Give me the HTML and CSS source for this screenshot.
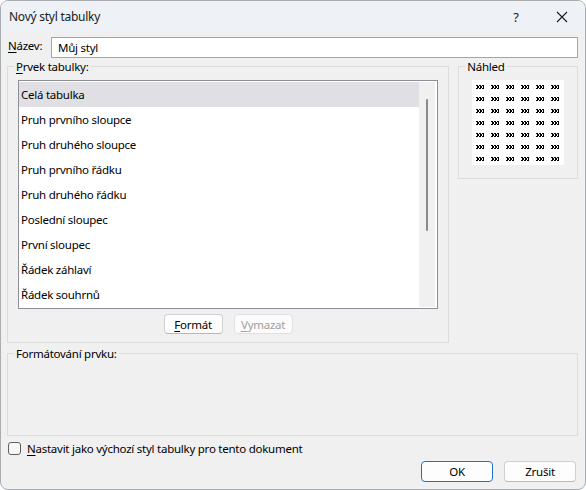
FILE: index.html
```html
<!DOCTYPE html>
<html lang="cs">
<head>
  <meta charset="UTF-8" />
  <title>Nový styl tabulky</title>
  <link rel="stylesheet" href="styles.css">
</head>
<body>

  <div class="dialog">
    <header class="titlebar">
      <span class="title">Nový styl tabulky</span>
      <span class="title-btn help">?</span>
      <span class="title-btn close">
        <svg width="12" height="12" viewBox="0 0 12 12">
          <path d="M1 1 L11 11 M11 1 L1 11" stroke="#1a1a1a" stroke-width="1.1" fill="none"/>
        </svg>
      </span>
    </header>

    <main class="content">
      <div class="name-row">
        <label for="style-name"><u>N</u>ázev:</label>
        <input type="text" id="style-name" value="Můj styl">
      </div>

      <div class="groups">
        <fieldset class="group group-element">
          <legend><u>P</u>rvek tabulky:</legend>
          <div class="group-body">
            <div class="listbox">
              <ul class="items">
                <li class="selected">Celá tabulka</li>
                <li>Pruh prvního sloupce</li>
                <li>Pruh druhého sloupce</li>
                <li>Pruh prvního řádku</li>
                <li>Pruh druhého řádku</li>
                <li>Poslední sloupec</li>
                <li>První sloupec</li>
                <li>Řádek záhlaví</li>
                <li>Řádek souhrnů</li>
              </ul>
              <div class="scrollbar"><div class="thumb"></div></div>
            </div>
            <div class="list-actions">
              <button class="btn"><u>F</u>ormát</button>
              <button class="btn" disabled><u>V</u>ymazat</button>
            </div>
          </div>
        </fieldset>

        <fieldset class="group group-preview">
          <legend>Náhled</legend>
          <div class="group-body">
            <div class="preview">
              <!-- vzorové buňky tabulky, 6 × 7 -->
              <svg width="92" height="85" shape-rendering="crispEdges">
                <defs>
                  <pattern id="cell" x="4" y="5" width="15" height="12" patternUnits="userSpaceOnUse">
                    <path d="M0 0h2v1h-2z M3 0h2v1h-2z M6 0h2v1h-2z
                             M1 1h2v1h-2z M4 1h2v1h-2z M7 1h1v1h-1z
                             M1 2h2v1h-2z M4 2h2v1h-2z M7 2h1v1h-1z
                             M0 3h2v1h-2z M3 3h2v1h-2z M6 3h2v1h-2z" fill="#000"/>
                  </pattern>
                </defs>
                <rect x="4" y="5" width="87" height="80" fill="url(#cell)"/>
              </svg>
            </div>
          </div>
        </fieldset>
      </div>

      <fieldset class="group group-format">
        <legend>Formátování prvku:</legend>
      </fieldset>

      <label class="check-row">
        <span class="checkbox"></span>
        <span><u>N</u>astavit jako výchozí styl tabulky pro tento dokument</span>
      </label>

      <div class="dialog-actions">
        <button class="btn btn-default">OK</button>
        <button class="btn">Zrušit</button>
      </div>
    </main>
  </div>

</body>
</html>
```

FILE: styles.css
```css
* {
  box-sizing: border-box;
}

body {
  margin: 0;
  font-family: 'Noto Sans', 'Open Sans', sans-serif;
  font-size: 11.5px;
  letter-spacing: -0.25px;
  color: #000;
  background: #fff;
}

.dialog {
  width: 586px;
  height: 490px;
  border: 1px solid #a9acb0;
  border-radius: 8px;
  overflow: hidden;
  background: #f0f0f0;
  display: flex;
  flex-direction: column;
}

/* title bar */
.titlebar {
  height: 31px;
  background: #eef2f6;
  display: flex;
  align-items: center;
  padding-left: 8px;
  color: #1a1a1a;
  font-size: 12px;
}

.title {
  flex: 1;
}

.title-btn {
  width: 46px;
  display: flex;
  justify-content: center;
  align-items: center;
}

.help {
  font-size: 13px;
}

.content {
  flex: 1;
  padding: 5px 7px 0 6px;
  display: flex;
  flex-direction: column;
}

u {
  text-decoration-thickness: 1px;
  text-underline-offset: 2px;
}

.name-row {
  display: flex;
  align-items: flex-start;
}

.name-row label {
  width: 44px;
  padding-left: 1px;
  line-height: 17px;
}

.name-row input {
  flex: 1;
  height: 21px;
  border: 1px solid #a5a5a5;
  background: #fff;
  font: inherit;
  letter-spacing: inherit;
  padding: 0 6px;
  outline: none;
}

.groups {
  display: flex;
  gap: 9px;
  margin-top: 1px;
  align-items: flex-start;
}

/* group boxes */
.group {
  margin: 0;
  border: 1px solid #dcdcdc;
  padding: 0;
  min-width: 0;
}

.group legend {
  margin-left: 6px;
  padding: 0 2px;
  line-height: 15px;
}

.group-element {
  width: 443px;
}

.group-element .group-body {
  padding: 6px 10px 8px 10px;
}

.listbox {
  height: 229px;
  border: 1px solid #8c9096;
  background: #fff;
  padding: 1px 2px 1px 0;
  display: flex;
}

.items {
  list-style: none;
  margin: 0;
  padding: 0;
  flex: 1;
}

.items li {
  height: 25px;
  line-height: 26px;
  padding-left: 2px;
  white-space: nowrap;
}

.items li.selected {
  background: #e0e0e4;
}

.scrollbar {
  width: 16px;
  background: #f0f0f0;
  padding-top: 17px;
  display: flex;
  justify-content: center;
}

.thumb {
  width: 2px;
  height: 132px;
  border-radius: 1px;
  background: #8a8a8a;
}

.list-actions {
  display: flex;
  justify-content: center;
  gap: 11px;
  margin-top: 5px;
}

.btn {
  height: 20px;
  width: 59px;
  font: inherit;
  letter-spacing: inherit;
  color: #000;
  background: #fdfdfd;
  border: 1px solid #d0d0d0;
  border-bottom-color: #b8b8b8;
  border-radius: 4px;
  padding: 0;
}

.btn:disabled {
  color: #a0a0a0;
  border-color: #e0e0e0;
  background: #fbfbfb;
}

.group-preview {
  width: 120px;
}

.group-preview .group-body {
  padding: 6px 13px 13px 13px;
}

.preview {
  width: 92px;
  height: 85px;
  background: #fff;
}

.preview svg {
  display: block;
}

.group-format {
  height: 90px;
  margin-top: 3px;
}

.check-row {
  display: flex;
  align-items: center;
  gap: 6px;
  margin-top: 5px;
  padding-left: 1px;
  line-height: 15px;
}

.checkbox {
  width: 13px;
  height: 13px;
  border: 1px solid #5f5f5f;
  border-radius: 3px;
  background: #f7f7f7;
}

.dialog-actions {
  display: flex;
  justify-content: flex-end;
  gap: 11px;
  margin-top: 5px;
  padding-right: 2px;
}

.dialog-actions .btn {
  width: 72px;
  height: 21px;
}

.btn-default {
  border: 1px solid #1a73c8;
}
```
